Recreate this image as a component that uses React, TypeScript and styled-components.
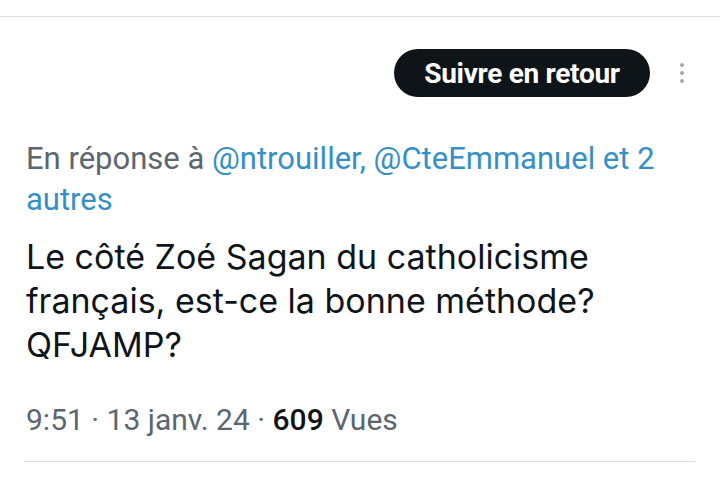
import React from "react";
import styled, { createGlobalStyle } from "styled-components";

const GlobalStyle = createGlobalStyle`
  body {
    margin: 0;
    background: #fff;
    font-family: Roboto, "Liberation Sans", sans-serif;
  }
`;

const Page = styled.div`
  width: 720px;
  height: 483px;
  overflow: hidden;
  background: #fff;
`;

const TopRule = styled.div`
  margin-top: 16px;
  height: 1px;
  background: #dedede;
`;

const Header = styled.div`
  display: flex;
  align-items: center;
  margin-top: 32px;
  padding: 0 36px 0 26px;
  height: 48px;
`;

const FollowButton = styled.button`
  margin-left: auto;
  height: 48px;
  width: 256px;
  padding: 0;
  border: none;
  border-radius: 24px;
  background: #0f1419;
  color: #fff;
  font-family: Roboto, "Liberation Sans", sans-serif;
  font-weight: 700;
  font-size: 28px;
  letter-spacing: -0.3px;
  cursor: pointer;
`;

const MoreDots = styled.div`
  display: flex;
  flex-direction: column;
  gap: 4px;
  margin-left: 30px;

  span {
    width: 4px;
    height: 4px;
    border-radius: 50%;
    background: #a8a8a8;
  }
`;

const Body = styled.div`
  padding: 0 24px 0 26px;
`;

const ReplyTo = styled.div`
  margin-top: 41px;
  font-size: 31px;
  line-height: 41px;
  color: #5b6670;
`;

const Mention = styled.span`
  color: #3590c8;
`;

const TweetText = styled.div`
  margin-top: 15px;
  font-family: Inter, Roboto, sans-serif;
  font-size: 34px;
  line-height: 44px;
  color: #0f1419;
`;

const Meta = styled.div`
  margin-top: 33px;
  font-size: 30px;
  line-height: 40px;
  color: #5b6670;

  b {
    font-weight: 500;
    color: #0f1419;
  }
`;

const BottomRule = styled.div`
  margin: 21px 25px 0 24px;
  height: 1px;
  background: #dedede;
`;

const App = () => {
  return (
    <Page>
      <GlobalStyle />
      <TopRule />
      <Header>
        <FollowButton>Suivre en retour</FollowButton>
        <MoreDots>
          <span />
          <span />
          <span />
        </MoreDots>
      </Header>
      <Body>
        <ReplyTo>
          En réponse à <Mention>@ntrouiller, @CteEmmanuel et 2 autres</Mention>
        </ReplyTo>
        <TweetText>
          Le côté Zoé Sagan du catholicisme
          <br />
          français, est-ce la bonne méthode?
          <br />
          QFJAMP?
        </TweetText>
        <Meta>
          9:51 · 13 janv. 24 · <b>609</b> Vues
        </Meta>
      </Body>
      <BottomRule />
    </Page>
  );
};

export default App;
